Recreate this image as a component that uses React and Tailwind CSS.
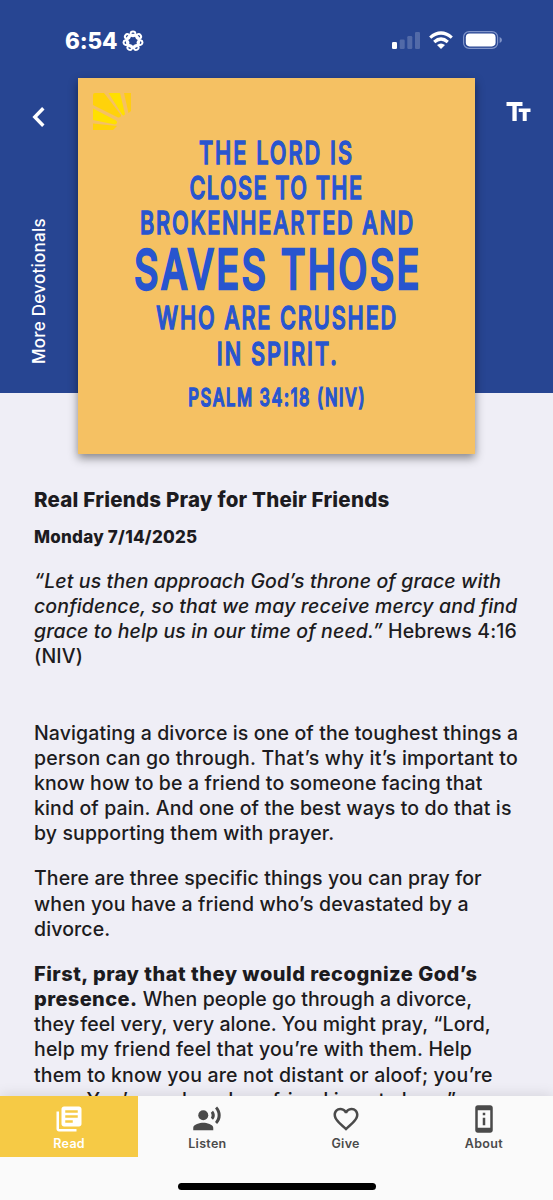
import { MdLibraryBooks, MdRecordVoiceOver, MdFavoriteBorder, MdPermDeviceInformation } from 'react-icons/md';

const verse = [
  { text: 'THE LORD IS', cls: 'h-[35px] text-[31.5px] leading-[35px] tracking-[2.9px]' },
  { text: 'CLOSE TO THE', cls: 'h-[35px] text-[31.5px] leading-[35px] tracking-[2.1px]' },
  { text: 'BROKENHEARTED AND', cls: 'h-[35px] text-[31.5px] leading-[35px] tracking-[2.6px] pl-[3px]' },
  { text: 'SAVES THOSE', cls: 'h-[60px] text-[55px] leading-[58px] tracking-[3.3px] pl-[4px] [-webkit-text-stroke:2.4px_#2855cf]' },
  { text: 'WHO ARE CRUSHED', cls: 'h-[36px] text-[31.5px] leading-[36px] tracking-[2.7px] pl-[2px]' },
  { text: 'IN SPIRIT.', cls: 'h-[35px] text-[31.5px] leading-[35px] tracking-[2.9px] pl-[4px]' },
  { text: 'PSALM 34:18 (NIV)', cls: 'mt-[12px] h-[30px] text-[24px] leading-[30px] tracking-[2.3px] pl-[2px]' },
];

const tabs = [
  { label: 'Read', Icon: MdLibraryBooks, active: true },
  { label: 'Listen', Icon: MdRecordVoiceOver },
  { label: 'Give', Icon: MdFavoriteBorder },
  { label: 'About', Icon: MdPermDeviceInformation },
];

function Lines({ lines, className = '' }) {
  return (
    <p className={`text-[19.5px] leading-[25.15px] font-medium tracking-[0.12px] ${className}`}>
      {lines.map((line, i) => (
        <span key={i} className="block whitespace-nowrap">{line}</span>
      ))}
    </p>
  );
}

function StatusBar() {
  return (
    <div className="flex h-[78px] items-start justify-between pt-[29px] pl-[65px] pr-[51px]">
      <div className="flex items-center gap-[5px]">
        <span className="text-[22.5px] leading-[24px] font-extrabold tracking-[-0.2px]">6:54</span>
        <svg width="22" height="22" viewBox="-11 -11 22 22" fill="none" stroke="currentColor" strokeWidth="2">
          <circle r="6.2" strokeWidth="2.2" />
          {[0, 1, 2, 3, 4, 5, 6].map((n) => (
            <circle key={n} cx="0" cy="-7.2" r="2.4" transform={`rotate(${(n * 360) / 7})`} />
          ))}
        </svg>
      </div>
      <div className="flex items-center pt-[2px]">
        <svg width="28" height="18" viewBox="0 0 28 18" fill="currentColor">
          <rect x="0" y="11" width="5" height="7" rx="1.3" />
          <g opacity="0.2">
            <rect x="7.7" y="8.5" width="5" height="9.5" rx="1.3" />
            <rect x="15.3" y="5" width="5" height="13" rx="1.3" />
            <rect x="23" y="1" width="5" height="17" rx="1.3" />
          </g>
        </svg>
        <svg className="ml-[9px]" width="24" height="18" viewBox="0 0 24 18" fill="none" stroke="currentColor" strokeWidth="3.2">
          <path d="M1.2 6.6 Q12 -2.6 22.8 6.6" />
          <path d="M5.2 11 Q12 5 18.8 11" />
          <path d="M8 14.1 Q12 10.8 16 14.1 L12 18 Z" fill="currentColor" stroke="none" />
        </svg>
        <svg className="ml-[10px]" width="39" height="18" viewBox="0 0 39 18">
          <rect x="0.6" y="0.6" width="34" height="16.8" rx="5.5" fill="none" stroke="#8195c9" strokeWidth="1.2" />
          <rect x="2.8" y="2.6" width="29.8" height="12.8" rx="3.8" fill="#fff" />
          <path d="M36.6 6 Q39 7 39 9 T36.6 12 Z" fill="#8195c9" />
        </svg>
      </div>
    </div>
  );
}

function VerseCard() {
  return (
    <div className="relative h-[376px] w-[397px] shrink-0 bg-[#f5c163] pt-[57px] text-center text-[#2855cf] shadow-[0_4px_9px_rgba(0,0,0,0.45)]">
      <svg className="absolute left-[15px] top-[15px]" width="38" height="38" viewBox="0 0 38 38">
        <path d="M0 2 Q0 0 2 0 H11 L28 22 Q28 25 25 24.500 L0 12 Z" fill="#ffd20a" />
        <path d="M15.500 0 H27 L32 21 Q31 23.500 29 21.500 Z" fill="#ffe000" />
        <path d="M31 0 H38 V18 L35.500 20 Z" fill="#ffcd14" />
        <path d="M0 15.500 L23 27.500 Q25.500 30 22 31.500 L0 27 Z" fill="#ffe000" />
        <path d="M0 30.500 L24 33 L20 37 H0 Z" fill="#ffd20a" />
      </svg>
      {verse.map((line) => (
        <div key={line.text} className={`flex scale-x-[0.69] justify-center whitespace-nowrap font-medium [-webkit-text-stroke:1.5px_#2855cf] ${line.cls}`}>
          {line.text}
        </div>
      ))}
    </div>
  );
}

export default function App() {
  return (
    <div className="flex h-[1200px] w-[553px] flex-col overflow-hidden bg-[#efeef6] font-['Inter','Liberation_Sans',sans-serif] text-[#1c1b20]">
      <header className="h-[393px] shrink-0 bg-[#274592] text-white">
        <StatusBar />
        <div className="flex">
          <div className="flex w-[78px] flex-col items-center">
            <svg className="mt-[29px] mr-[2px]" width="13" height="20" viewBox="0 0 13 20" fill="none" stroke="currentColor" strokeWidth="3.4">
              <path d="M11.300 1.300 L2.800 10 L11.300 18.700" />
            </svg>
            <span className="mt-[88px] h-[152px] rotate-180 whitespace-nowrap text-center text-[17px] leading-[20px] tracking-[0.25px] font-medium [writing-mode:vertical-rl]">
              More Devotionals
            </span>
          </div>
          <VerseCard />
          <div className="flex w-[78px] justify-end pr-[22px] pt-[24px]">
            <svg width="25" height="20" viewBox="0 0 25 20" fill="currentColor">
              <path d="M0.500 0 H16.500 V4 H10.700 V19 H6.400 V4 H0.500 Z" />
              <path d="M12.700 6.500 H24.500 V10 H20.700 V19 H16.700 V10 H12.700 Z" />
            </svg>
          </div>
        </div>
      </header>

      <main className="min-h-0 flex-1 overflow-hidden pl-[34px] pt-[94px]">
        <h1 className="whitespace-nowrap text-[20.5px] leading-[26px] font-extrabold tracking-[0.22px]">Real Friends Pray for Their Friends</h1>
        <h2 className="mt-[14px] whitespace-nowrap text-[17px] leading-[20px] font-extrabold tracking-[0.25px]">Monday 7/14/2025</h2>
        <Lines
          className="mt-[22px]"
          lines={[
            <i>“Let us then approach God’s throne of grace with</i>,
            <i>confidence, so that we may receive mercy and find</i>,
            <><i>grace to help us in our time of need.”</i> Hebrews 4:16</>,
            '(NIV)',
          ]}
        />
        <Lines
          className="mt-[51px]"
          lines={[
            'Navigating a divorce is one of the toughest things a',
            <span className="tracking-[0.21px]">person can go through. That’s why it’s important to</span>,
            'know how to be a friend to someone facing that',
            'kind of pain. And one of the best ways to do that is',
            'by supporting them with prayer.',
          ]}
        />
        <Lines
          className="mt-[20px]"
          lines={[
            'There are three specific things you can pray for',
            'when you have a friend who’s devastated by a',
            'divorce.',
          ]}
        />
        <Lines
          className="mt-[20px]"
          lines={[
            <b className="text-[20px] font-extrabold tracking-[0.5px]">First, pray that they would recognize God’s</b>,
            <><b className="text-[20px] font-extrabold tracking-[0.4px]">presence.</b><span className="tracking-[0.07px]"> When people go through a divorce,</span></>,
            <span className="tracking-[0.08px]">they feel very, very alone. You might pray, “Lord,</span>,
            <span className="tracking-[0.18px]">help my friend feel that you’re with them. Help</span>,
            <span className="tracking-[0.16px]">them to know you are not distant or aloof; you’re</span>,
            'near. You’re real, and my friend is not alone.”',
          ]}
        />
      </main>

      <nav className="relative flex h-[104px] shrink-0 flex-col items-center bg-[#fafafa] shadow-[0_-2px_12px_rgba(0,0,0,0.1)]">
        <div className="flex w-full">
          {tabs.map(({ label, Icon, active }) => (
            <button
              key={label}
              className={`flex h-[61px] flex-1 flex-col items-center pt-[8px] ${active ? 'bg-[#f6ca45] text-white' : 'text-[#4a4a4a]'}`}
            >
              <Icon size={30} />
              <span className="mt-[1px] text-[12.5px] leading-[17px] font-semibold tracking-[0.3px]">{label}</span>
            </button>
          ))}
        </div>
        <div className="mt-[26px] h-[7px] w-[198px] rounded-full bg-black" />
      </nav>
    </div>
  );
}
